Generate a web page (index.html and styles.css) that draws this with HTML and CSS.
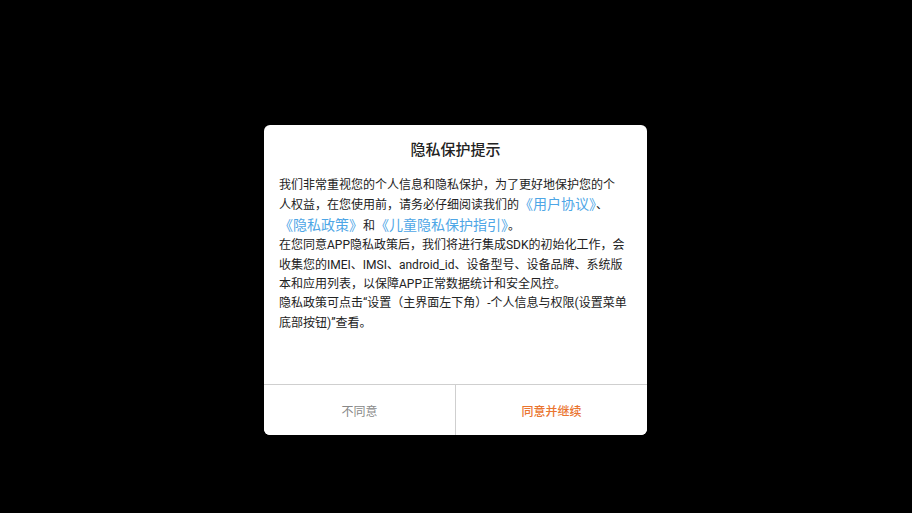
FILE: index.html
```html
<!DOCTYPE html>
<html lang="zh-CN">
<head>
  <meta charset="UTF-8" />
  <meta name="viewport" content="width=device-width, initial-scale=1.0"/>
  <title>隐私保护提示</title>
  <link rel="stylesheet" href="styles.css">
</head>
<body>
  <div class="dialog">
    <div class="dialog-title">隐私保护提示</div>
    <div class="dialog-body">
      <p class="intro">我们非常重视您的个人信息和隐私保护，为了更好地保护您的个人权益，在您使用前，请务必仔细阅读我们的<a class="link" href="#">《用户协议》</a>、<a class="link" href="#">《隐私政策》</a>和<a class="link" href="#">《儿童隐私保护指引》</a>。</p>
      <p>在您同意APP隐私政策后，我们将进行集成SDK的初始化工作，会收集您的IMEI、IMSI、android_id、设备型号、设备品牌、系统版本和应用列表，以保障APP正常数据统计和安全风控。</p>
      <p>隐私政策可点击“设置（主界面左下角）-个人信息与权限(设置菜单底部按钮)”查看。</p>
    </div>
    <div class="dialog-footer">
      <button class="btn btn-cancel">不同意</button>
      <button class="btn btn-ok">同意并继续</button>
    </div>
  </div>
</body>
</html>
```

FILE: styles.css
```css
html, body {
  margin: 0;
  height: 100%;
  background: #000;
}
body {
  padding: 125px 0 0 264px;
  box-sizing: border-box;
  font-family: Roboto, "Noto Sans CJK SC", sans-serif;
}
.dialog {
  width: 383px;
  height: 310px;
  background: #fff;
  border-radius: 6px;
  display: flex;
  flex-direction: column;
  overflow: hidden;
}
.dialog-title {
  padding-top: 15px;
  line-height: 20px;
  font-size: 15px;
  font-weight: 500;
  color: #222;
  text-align: center;
}
.dialog-body {
  flex: 1;
  padding: 16px 16px 0 15px;
  font-size: 12px;
  line-height: 19.4px;
  color: #222;
}
.dialog-body p {
  margin: 0;
}
/* keeps the first paragraph's wrap the same as the app's line breaker */
.dialog-body .intro {
  padding-right: 5px;
}
.link {
  font-size: 14px;
  color: #4ea6e6;
  text-decoration: none;
}
.dialog-footer {
  height: 50px;
  border-top: 1px solid #cfcfcf;
  display: flex;
}
.btn {
  flex: 1;
  border: none;
  background: #fff;
  font-family: inherit;
  font-size: 12px;
  padding: 0;
  cursor: pointer;
}
.btn-cancel {
  color: #888;
  border-right: 1px solid #cfcfcf;
}
.btn-ok {
  color: #ea7530;
  font-weight: 500;
}
```
